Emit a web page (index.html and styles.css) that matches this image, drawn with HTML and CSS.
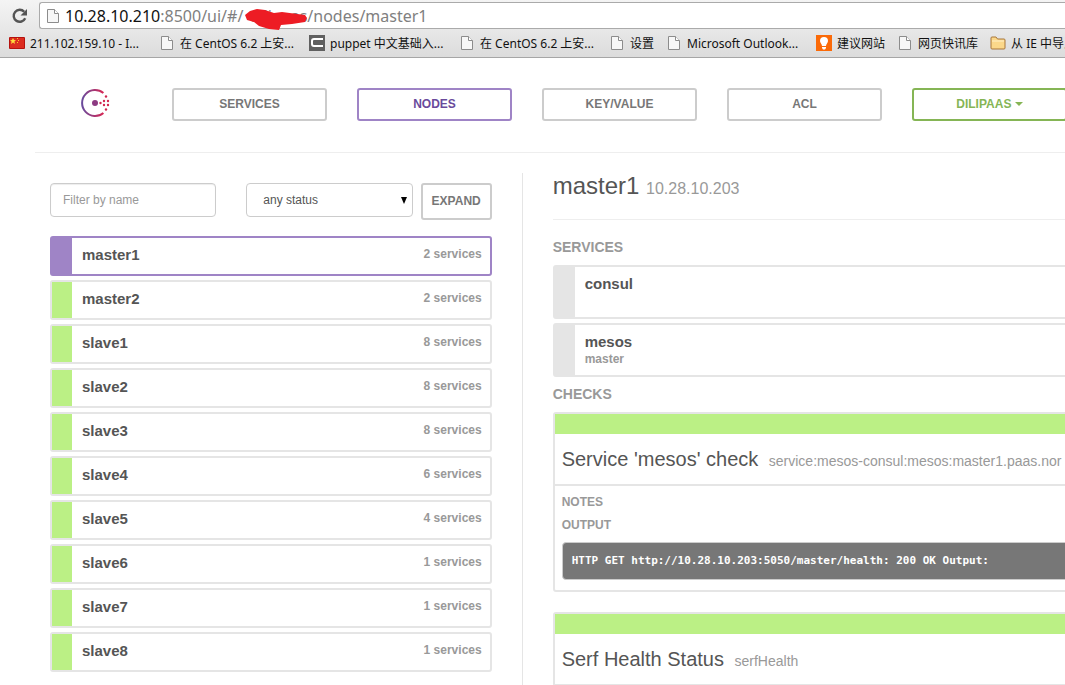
FILE: index.html
```html
<!DOCTYPE html>
<html lang="en">
<head>
<meta charset="UTF-8">
<title>Consul</title>
<link rel="stylesheet" href="styles.css">
</head>
<body>

<svg width="0" height="0" class="defs">
  <symbol id="page" viewBox="0 0 12 14">
    <path d="M1 .5h6.5l4 4v9H.5V.5z" fill="#f7f7f7" stroke="#8c8c8c"/>
    <path d="M7.5.5v4h4" fill="#fff" stroke="#8c8c8c"/>
  </symbol>
</svg>

<header class="browser">
  <div class="toolbar">
    <button class="reload" aria-label="Reload">
      <svg width="16" height="16" viewBox="0 0 16 16">
        <path d="M13.2 10.2A6 6 0 1 1 12.2 3.8" fill="none" stroke="#555" stroke-width="2.4"/>
        <path d="M15 1v6.5H8.5z" fill="#555"/>
      </svg>
    </button>
    <div class="address">
      <svg class="address-icon" width="12" height="14"><use href="#page"/></svg>
      <span class="host">10.28.10.210</span><span>:8500/ui/#/</span><span class="hidden-part">dilipaas<svg class="scribble" width="62" height="22" viewBox="0 0 62 22"><path d="M0 6L5 2L12 0L20 1L29 4L37 3L60 6L62 9L60 13L47 15L36 16L34 21L24 20L14 17L9 13L2 11z" fill="#ed1c24"/></svg></span><span>/nodes/master1</span>
    </div>
  </div>
  <nav class="bookmarks">
    <a href="#" class="wide"><svg width="16" height="12" viewBox="0 0 16 12"><rect width="16" height="12" rx="1" fill="#b5120e"/><rect x="1" y="1" width="14" height="10" fill="#dc2c20"/><path d="M4 1l1 2 2 .2L5.400 4.500 6 7 4 5.600 2 7l.6-2.500L1 3.200 3 3z" fill="#ffdc3c"/><path d="M8 1h1v1H8zM9 3h1v1H9zM8 5h1v1H8z" fill="#ffc928"/></svg><span>211.102.159.10 - I...</span></a>
    <a href="#" class="wide"><svg width="16" height="14"><use href="#page" x="2" width="12" height="14"/></svg><span>在 CentOS 6.2 上安...</span></a>
    <a href="#" class="wide"><svg width="16" height="16" viewBox="0 0 16 16"><rect width="16" height="16" fill="#606060"/><path d="M14 4H5Q3 4 3 6v3q0 2 2 2h9" fill="none" stroke="#fff" stroke-width="2"/></svg><span>puppet 中文基础入...</span></a>
    <a href="#" class="wide"><svg width="16" height="14"><use href="#page" x="2" width="12" height="14"/></svg><span>在 CentOS 6.2 上安...</span></a>
    <a href="#"><svg width="16" height="14"><use href="#page" x="2" width="12" height="14"/></svg><span>设置</span></a>
    <a href="#" class="wide"><svg width="16" height="14"><use href="#page" x="2" width="12" height="14"/></svg><span>Microsoft Outlook...</span></a>
    <a href="#"><svg width="16" height="16" viewBox="0 0 16 16"><rect width="16" height="16" fill="#fb6a08"/><path d="M8 2a4 4 0 0 0-4 4c0 2 2 3 2 5h4c0-2 2-3 2-5a4 4 0 0 0-4-4zM6 12h4v1L9 14.500H7L6 13z" fill="#fff"/></svg><span>建议网站</span></a>
    <a href="#"><svg width="16" height="14"><use href="#page" x="2" width="12" height="14"/></svg><span>网页快讯库</span></a>
    <a href="#"><svg width="16" height="14" viewBox="0 0 16 14"><path d="M1 12V2q0-1 1-1h4l1.500 2H14q1 0 1 1v8q0 1-1 1H2q-1 0-1-1z" fill="#fbd88a" stroke="#a8763a"/><path d="M2 5h12" stroke="#fff0c8"/></svg><span>从 IE 中导入</span></a>
  </nav>
</header>

<div class="app">
  <nav class="topbar">
    <a href="#" class="logo" aria-label="Consul">
      <svg width="30" height="30" viewBox="0 0 30 30">
        <defs>
          <linearGradient id="ring" x1="0" x2="1" y1="0" y2="0">
            <stop offset="0" stop-color="#694a9c"/>
            <stop offset="1" stop-color="#d62754"/>
          </linearGradient>
        </defs>
        <path d="M23.400 5A13 13 0 1 0 23.400 25" fill="none" stroke="url(#ring)" stroke-width="2"/>
        <circle cx="15" cy="15" r="3" fill="#8c3a82"/>
        <g fill="#d0264f">
          <circle cx="20.500" cy="15" r="1.200"/><circle cx="24" cy="13" r="1.200"/><circle cx="24" cy="17" r="1.200"/>
          <circle cx="28" cy="13" r="1.200"/><circle cx="28" cy="17" r="1.200"/><circle cx="26" cy="8.500" r="1.200"/><circle cx="26" cy="21.500" r="1.200"/>
        </g>
      </svg>
    </a>
    <button class="btn">SERVICES</button>
    <button class="btn btn-active">NODES</button>
    <button class="btn">KEY/VALUE</button>
    <button class="btn">ACL</button>
    <button class="btn btn-dc">DILIPAAS <span class="caret"></span></button>
  </nav>

  <main class="columns">
    <section class="nodes">
      <form class="filters">
        <input type="text" class="control" placeholder="Filter by name" aria-label="Filter by name">
        <span class="select-wrap">
          <select class="control" aria-label="Status">
            <option>any status</option>
            <option>passing</option>
            <option>failing</option>
          </select>
        </span>
        <button type="button" class="btn btn-expand">EXPAND</button>
      </form>
      <div class="list">
        <a href="#" class="item item-active"><span class="name">master1</span><span class="count">2 services</span></a>
        <a href="#" class="item"><span class="name">master2</span><span class="count">2 services</span></a>
        <a href="#" class="item"><span class="name">slave1</span><span class="count">8 services</span></a>
        <a href="#" class="item"><span class="name">slave2</span><span class="count">8 services</span></a>
        <a href="#" class="item"><span class="name">slave3</span><span class="count">8 services</span></a>
        <a href="#" class="item"><span class="name">slave4</span><span class="count">6 services</span></a>
        <a href="#" class="item"><span class="name">slave5</span><span class="count">4 services</span></a>
        <a href="#" class="item"><span class="name">slave6</span><span class="count">1 services</span></a>
        <a href="#" class="item"><span class="name">slave7</span><span class="count">1 services</span></a>
        <a href="#" class="item"><span class="name">slave8</span><span class="count">1 services</span></a>
      </div>
    </section>

    <section class="detail">
      <h1>master1 <small>10.28.10.203</small></h1>

      <h2>SERVICES</h2>
      <a href="#" class="service"><span class="name">consul</span></a>
      <a href="#" class="service"><span class="name">mesos</span><span class="tags">master</span></a>

      <h2 class="checks-title">CHECKS</h2>
      <article class="check">
        <h3>Service 'mesos' check <small>service:mesos-consul:mesos:master1.paas.nor</small></h3>
        <div class="check-body">
          <h4>NOTES</h4>
          <h4>OUTPUT</h4>
          <pre>HTTP GET http://10.28.10.203:5050/master/health: 200 OK Output:</pre>
        </div>
      </article>
      <article class="check">
        <h3>Serf Health Status <small>serfHealth</small></h3>
      </article>
    </section>
  </main>
</div>

</body>
</html>
```

FILE: styles.css
```css
* { box-sizing: border-box; }
html, body {
  height: 100%;
  overflow: hidden;
}
body {
  margin: 0;
  background: #fff;
  color: #555;
  font-family: "Liberation Sans", Arial, sans-serif;
  font-size: 12px;
  display: flex;
  flex-direction: column;
}
a { color: inherit; text-decoration: none; }
button { cursor: pointer; }
.defs { position: absolute; }

/* browser bar */
.browser {
  flex: none;
  background: linear-gradient(#f4f4f4, #dcdcdc);
  border-bottom: 1px solid #a6a6a6;
  font-family: "Noto Sans", "Noto Sans CJK SC", sans-serif;
}
.toolbar {
  display: flex;
  align-items: center;
  padding: 2px 0 0 12px;
}
.reload {
  width: 16px;
  height: 16px;
  padding: 0;
  border: 0;
  background: none;
}
.reload svg { display: block; }
.address {
  flex: 1;
  display: flex;
  align-items: center;
  height: 27px;
  margin-left: 11px;
  padding-left: 7px;
  background: #fff;
  border: 1px solid #aaa;
  border-right: 0;
  border-radius: 3px 0 0 3px;
  color: #808080;
  font-family: "Noto Sans", sans-serif;
  font-size: 16px;
  white-space: nowrap;
}
.address-icon { margin-right: 6px; }
.host { color: #111; }
.hidden-part {
  position: relative;
  min-width: 64px;
  text-align: right;
}
.scribble {
  position: absolute;
  right: 0;
  top: 4px;
}
.bookmarks {
  display: flex;
  align-items: center;
  height: 28px;
  padding-left: 9px;
  color: #111;
  font-size: 12px;
  white-space: nowrap;
}
.bookmarks a {
  flex: none;
  display: flex;
  align-items: center;
  gap: 5px;
  padding-right: 12px;
}
.bookmarks .wide { width: 150px; padding-right: 0; }
.bookmarks svg { flex: none; }

/* top navigation */
.app {
  flex: 1;
  display: flex;
  flex-direction: column;
  margin: 0 -15px 0 35px;
}
.topbar {
  display: grid;
  grid-template-columns: 107px repeat(5, 1fr);
  column-gap: 30px;
  align-items: start;
  padding: 30px 13px 31px 0;
  border-bottom: 1px solid #eee;
}
.logo { padding-left: 45px; }
.logo svg { display: block; }
.btn {
  height: 33px;
  padding: 0 0 2px;
  background: #fff;
  border: 2px solid #ccc;
  border-radius: 3px;
  color: #777;
  font: bold 12px "Liberation Sans", Arial, sans-serif;
}
.btn-active { border-color: #9f84c6; color: #694a9c; }
.btn-dc { border-color: #85b555; color: #85b555; }
.caret {
  display: inline-block;
  vertical-align: middle;
  border-top: 4px solid;
  border-left: 4px solid transparent;
  border-right: 4px solid transparent;
}

/* node list */
.columns {
  flex: 1;
  display: grid;
  grid-template-columns: 7fr 8fr;
  margin-top: 20px;
}
.nodes {
  padding: 10px 30px 0 15px;
  border-right: 1px solid #e5e5e5;
}
.filters {
  display: flex;
  align-items: flex-start;
  gap: 8px;
  margin-bottom: 16px;
}
.control {
  width: 100%;
  height: 34px;
  padding: 0 12px;
  background: #fff;
  border: 1px solid #ccc;
  border-radius: 4px;
  color: #555;
  font: 12px "Liberation Sans", Arial, sans-serif;
}
.control::placeholder { color: #999; }
input.control {
  flex: 1 1 30%;
  min-width: 0;
  box-shadow: inset 0 1px 1px rgba(0,0,0,0.075);
}
select.control { appearance: none; padding: 0 16px; }
.select-wrap {
  position: relative;
  flex: 1 1 30%;
  margin-left: 22px;
}
.select-wrap::after {
  content: "";
  position: absolute;
  right: 6px;
  top: 14px;
  border-top: 7px solid #000;
  border-left: 3px solid transparent;
  border-right: 3px solid transparent;
}
.btn-expand { width: 71px; height: 37px; }
.item {
  display: flex;
  justify-content: space-between;
  height: 40px;
  margin-bottom: 4px;
  padding: 8px 8px 0 10px;
  border: 2px solid #e5e5e5;
  border-radius: 3px;
}
.item::before {
  content: "";
  flex: none;
  width: 20px;
  height: 36px;
  margin: -8px 10px 0 -10px;
  background: #bbf085;
}
.item-active { border-color: #9f84c6; }
.item-active::before { background: #9f84c6; }
.name {
  flex: 1;
  font-size: 15px;
  font-weight: bold;
  line-height: 18px;
}
.count, .tags {
  color: #999;
  font-weight: bold;
  line-height: 16px;
}

/* node detail */
.detail {
  min-width: 0;
  padding-left: 30px;
}
h1, h2, h3, h4 { margin: 0; }
h1 {
  height: 47px;
  font-size: 24px;
  font-weight: normal;
  line-height: 26px;
  border-bottom: 1px solid #eee;
}
small { color: #999; }
h1 small { font-size: 16px; }
h2 {
  margin: 17px 0 8px;
  color: #999;
  font-size: 14px;
  line-height: 20px;
}
h2.checks-title { margin-top: 7px; }
.service {
  display: flex;
  flex-direction: column;
  height: 54px;
  margin-bottom: 4px;
  padding: 8px 10px 0;
  border: 2px solid #e5e5e5;
  border-left-width: 22px;
  border-radius: 3px;
}
.service .name { flex: none; }
.check {
  margin-bottom: 20px;
  border: 2px solid #e5e5e5;
  border-radius: 3px;
}
.check h3 {
  height: 72px;
  padding: 13px 7px 0;
  border-top: 20px solid #bbf085;
  border-bottom: 2px solid #e5e5e5;
  font-size: 20px;
  font-weight: normal;
  line-height: 24px;
  white-space: nowrap;
  overflow: hidden;
}
.check h3 small { margin-left: 5px; font-size: 14px; }
.check-body { padding: 6px 7px 10px; }
h4 {
  margin-bottom: 3px;
  color: #999;
  font-size: 12px;
  line-height: 20px;
}
pre {
  margin: 7px 0 0;
  padding: 9px;
  background: #777;
  border: 1px solid #ccc;
  border-radius: 4px;
  color: #fff;
  font: bold 11px/18px "DejaVu Sans Mono", monospace;
}
```
